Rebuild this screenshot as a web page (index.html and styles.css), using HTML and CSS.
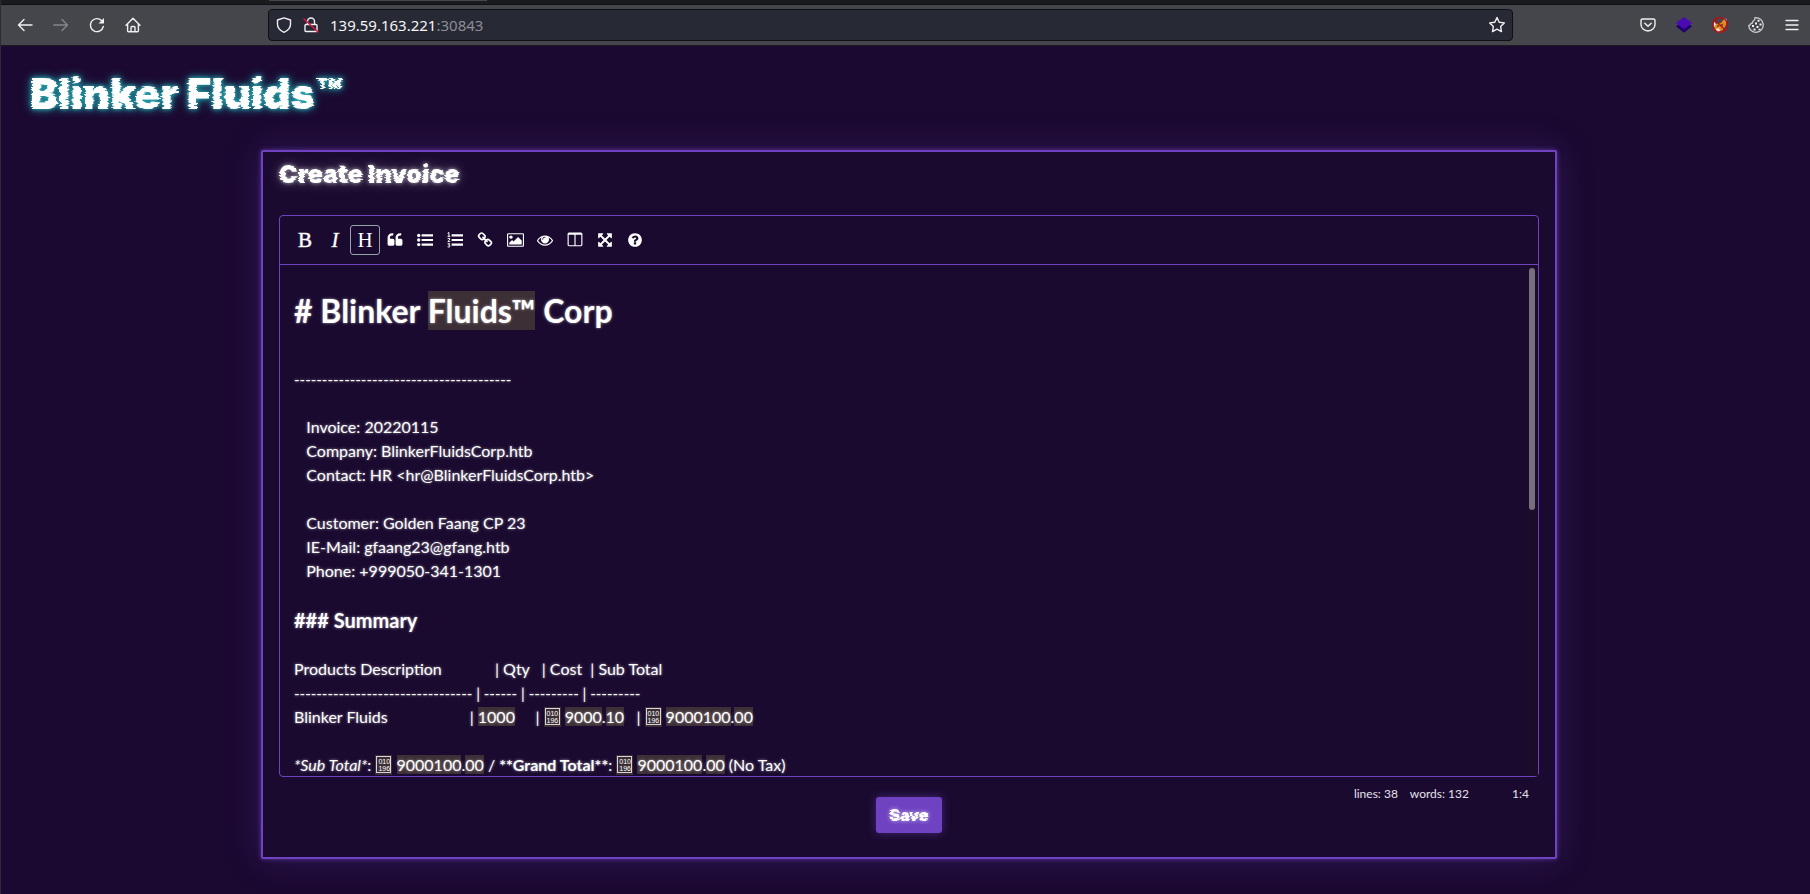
FILE: index.html
```html
<!DOCTYPE html>
<html lang="en">
<head>
<meta charset="utf-8">
<title>Blinker Fluids™</title>
<link rel="stylesheet" href="styles.css">
</head>
<body>
<svg class="defs" aria-hidden="true">
  <filter id="glitch" x="-10%" y="-20%" width="120%" height="140%" color-interpolation-filters="sRGB">
    <feTurbulence type="fractalNoise" baseFrequency="0.05 0.5" numOctaves="2" seed="4"/>
    <feColorMatrix values="1 0 0 0 0  0 0 0 0 0.5  0 0 0 0 0.5  0 0 0 0 1" result="n"/>
    <feDisplacementMap in="SourceGraphic" in2="n" scale="8" xChannelSelector="R" yChannelSelector="G"/>
  </filter>
  <filter id="glitch-sm" x="-10%" y="-20%" width="120%" height="140%" color-interpolation-filters="sRGB">
    <feTurbulence type="fractalNoise" baseFrequency="0.06 0.6" numOctaves="2" seed="7"/>
    <feColorMatrix values="1 0 0 0 0  0 0 0 0 0.5  0 0 0 0 0.5  0 0 0 0 1" result="n"/>
    <feDisplacementMap in="SourceGraphic" in2="n" scale="5" xChannelSelector="R" yChannelSelector="G"/>
  </filter>
</svg>

<div class="tabs"><span class="tab"></span></div>
<nav class="chrome" aria-label="Browser toolbar">
  <div class="nav-buttons">
    <button class="chrome-btn" aria-label="Back"><svg viewBox="0 0 16 16"><path d="M15 8H1.500M7 2.500 1.500 8 7 13.500"/></svg></button>
    <button class="chrome-btn dim" aria-label="Forward"><svg viewBox="0 0 16 16"><path d="M1 8h13.500M9 2.500 14.500 8 9 13.500"/></svg></button>
    <button class="chrome-btn" aria-label="Reload"><svg viewBox="0 0 16 16"><path d="M14.300 9.500A6.500 6.500 0 1 1 12.600 3.600"/><path class="solid" d="M15 1v5.500H9.500z"/></svg></button>
    <button class="chrome-btn" aria-label="Home"><svg viewBox="0 0 16 16"><path d="M1 8.200 8 1.300l7 6.900M2.600 7v6.700q0 1 1 1h8.800q1 0 1-1V7M6 14.500v-4q0-1 1-1h2q1 0 1 1v4"/></svg></button>
  </div>
  <div class="urlbar">
    <svg class="ico" viewBox="0 0 16 16"><path d="M8 .900 14.500 3v4.200c0 3.600-2.500 6.300-6.500 8.100C4 13.500 1.500 10.800 1.500 7.200V3z"/></svg>
    <svg class="ico lock" viewBox="0 0 16 16"><path d="M4.500 7V4.500a3.500 3.500 0 0 1 7 0V7M3 7.500h10q1 0 1 1v5q0 1-1 1H3q-1 0-1-1v-5q0-1 1-1z"/><path class="strike" d="M1 2l14 13"/></svg>
    <div class="url" role="textbox" aria-label="Address" contenteditable="true" spellcheck="false">139.59.163.221<span class="port">:30843</span></div>
    <button class="chrome-btn star" aria-label="Bookmark"><svg viewBox="0 0 16 16"><path d="M8 .500l2.200 4.700 5.100.700-3.700 3.500.9 5.200L8 12.200l-4.500 2.400.9-5.200L.700 5.900l5.100-.7z"/></svg></button>
  </div>
  <div class="ext-buttons">
    <button class="chrome-btn" aria-label="Pocket"><svg viewBox="0 0 16 16"><path d="M2.500 2h11q1.500 0 1.500 1.500V7.500a7 6.500 0 0 1-14 0V3.500Q1 2 2.500 2zM4.800 6.300 8 9.300l3.200-3"/></svg></button>
    <button class="chrome-btn" aria-label="Layers"><svg viewBox="0 0 16 16"><path fill="#22006f" stroke="none" d="M0 9.500 3 7l5 3.500L13 7l3 2.500-8 6.300z"/><path fill="#4b0bb3" stroke="none" d="M8 0l8 6-8 6-8-6z"/></svg></button>
    <button class="chrome-btn" aria-label="Proxy"><svg viewBox="0 0 16 16"><path fill="#e08a1c" stroke="none" d="M3 7l6-1 3-4 2 1v5l-3 5-5 2-3-3z"/><path fill="#e9e3dc" stroke="none" d="M1.500 4l2.500 3-2 4zM11.500 1.500l3 .5-.500 4zM4 12l3-1 1 3-3 1z"/><circle cx="6" cy="9" r="1" fill="#6b3a12" stroke="none"/><circle cx="10" cy="8" r="1" fill="#6b3a12" stroke="none"/><circle cx="8" cy="8" r="7.300" stroke="#b80f14"/><path stroke="#b80f14" d="M3 3l10 10"/></svg></button>
    <button class="chrome-btn cookie" aria-label="Cookies"><svg viewBox="0 0 16 16"><path d="M7 .800a7.300 7.300 0 1 1-6.300 7.700q1.800 0 2-1.800 1.800 0 2.200-2.200Q7 3.500 7 .800z"/><path class="solid" d="M9.500 2.700h2v2h-2zM7 5.500h2v2H7zM11.500 6.500h2v2h-2zM4 8h2v2H4zM8.500 9h2v2h-2zM5.500 11.500h2v2h-2zM10.500 11.700h2v1.500h-2z"/></svg></button>
    <button class="chrome-btn" aria-label="Menu"><svg viewBox="0 0 16 16"><path d="M2 3.500h12M2 8h12M2 12.500h12"/></svg></button>
  </div>
</nav>

<div class="page">
  <header class="brand"><h1>Blinker Fluids™</h1></header>
  <main class="panel">
    <h2 class="panel-title">Create Invoice</h2>
    <div class="editor">
      <div class="tools" role="toolbar" aria-label="Formatting">
        <button class="tool letter bold" title="Bold">B</button>
        <button class="tool letter italic" title="Italic">I</button>
        <button class="tool letter active" title="Heading">H</button>
        <button class="tool" aria-label="Quote"><svg viewBox="0 0 1792 1792"><path d="M832 960v384q0 80-56 136t-136 56h-384q-80 0-136-56t-56-136v-704q0-104 40.500-198.500t109.500-163.500 163.500-109.500 198.500-40.500h64q26 0 45 19t19 45v128q0 26-19 45t-45 19h-64q-106 0-181 75t-75 181v32q0 40 28 68t68 28h224q80 0 136 56t56 136zm896 0v384q0 80-56 136t-136 56h-384q-80 0-136-56t-56-136v-704q0-104 40.500-198.500t109.500-163.500 163.500-109.500 198.500-40.500h64q26 0 45 19t19 45v128q0 26-19 45t-45 19h-64q-106 0-181 75t-75 181v32q0 40 28 68t68 28h224q80 0 136 56t56 136z"/></svg></button>
        <button class="tool" aria-label="Generic List"><svg viewBox="0 0 16 16"><circle cx="1.700" cy="3.400" r="1.700"/><circle cx="1.700" cy="8" r="1.700"/><circle cx="1.700" cy="12.600" r="1.700"/><path d="M4.600 2.300H16v2.200H4.600zM4.600 6.900H16v2.200H4.600zM4.600 11.500H16v2.200H4.600z"/></svg></button>
        <button class="tool" aria-label="Numbered List"><svg viewBox="0 0 16 16"><path d="M4.600 2.300H16v2.200H4.600zM4.600 6.900H16v2.200H4.600zM4.600 11.500H16v2.200H4.600z"/><path class="thin" d="M.600 1.300 1.900.500v3.700M.500 4.300h2.800M.600 6.700q2.200-1.200 2.200.300 0 .900-2 2.500h2.400M.600 11.700h2.200l-1.200 1.500q1.700 0 1.400 1.200-.7 1.200-2.400.4"/></svg></button>
        <button class="tool" aria-label="Create Link"><svg viewBox="0 0 1792 1792"><path d="M1520 1216q0-40-28-68l-208-208q-28-28-68-28-42 0-72 32 3 3 19 18.500t21.500 21.500 15 19 13 25.500 3.500 27.500q0 40-28 68t-68 28q-15 0-27.500-3.500t-25.500-13-19-15-21.500-21.500-18.500-19q-33 31-33 73 0 40 28 68l206 207q27 27 68 27 40 0 68-26l147-146q28-28 28-67zm-703-705q0-40-28-68l-206-207q-28-28-68-28-39 0-68 27l-147 146q-28 28-28 67 0 40 28 68l208 208q27 27 68 27 42 0 72-31-3-3-19-18.500t-21.500-21.500-15-19-13-25.500-3.500-27.500q0-40 28-68t68-28q15 0 27.500 3.500t25.500 13 19 15 21.500 21.500 18.500 19q33-31 33-73zm895 705q0 120-85 203l-147 146q-83 83-203 83-121 0-204-85l-206-207q-83-83-83-203 0-123 88-209l-88-88q-86 88-208 88-120 0-204-84l-208-208q-84-84-84-204t85-203l147-146q83-83 203-83 121 0 204 85l206 207q83 83 83 203 0 123-88 209l88 88q86-88 208-88 120 0 204 84l208 208q84 84 84 204z"/></svg></button>
        <button class="tool wide" aria-label="Insert Image"><svg viewBox="0 0 1920 1792"><path d="M640 576q0 80-56 136t-136 56-136-56-56-136 56-136 136-56 136 56 56 136zm1024 384v448h-1408v-192l320-320 160 160 512-512zm96-704h-1600q-13 0-22.500 9.500t-9.500 22.500v1216q0 13 9.500 22.500t22.500 9.500h1600q13 0 22.500-9.500t9.500-22.500v-1216q0-13-9.500-22.500t-22.500-9.500zm160 32v1216q0 66-47 113t-113 47h-1600q-66 0-113-47t-47-113v-1216q0-66 47-113t113-47h1600q66 0 113 47t47 113z"/></svg></button>
        <button class="tool" aria-label="Toggle Preview"><svg viewBox="0 0 1792 1792"><path d="M1664 960q-152-236-381-353 61 104 61 225 0 185-131.500 316.500t-316.500 131.500-316.500-131.500-131.500-316.500q0-121 61-225-229 117-381 353 133 205 333.500 326.500t434.500 121.500 434.500-121.500 333.500-326.500zm-720-384q0-20-14-34t-34-14q-125 0-214.500 89.500t-89.500 214.500q0 20 14 34t34 14 34-14 14-34q0-86 61-147t147-61q20 0 34-14t14-34zm848 384q0 34-20 69-140 230-376.500 368.500t-499.500 138.500-499.500-139-376.500-368q-20-35-20-69t20-69q140-229 376.500-368t499.500-139 499.500 139 376.500 368q20 35 20 69z"/></svg></button>
        <button class="tool" aria-label="Toggle Side by Side"><svg viewBox="-64 -64 1792 1792"><path d="M160 1408h608v-1152h-640v1120q0 13 9.500 22.500t22.500 9.500zm1376-32v-1120h-640v1152h608q13 0 22.500-9.500t9.500-22.500zm128-1216v1216q0 66-47 113t-113 47h-1344q-66 0-113-47t-47-113v-1216q0-66 47-113t113-47h1344q66 0 113 47t47 113z"/></svg></button>
        <button class="tool" aria-label="Toggle Fullscreen"><svg viewBox="0 0 1792 1792"><path d="M1411 541l-355 355 355 355 144-144q29-31 70-14 39 17 39 59v448q0 26-19 45t-45 19h-448q-42 0-59-40-17-39 14-69l144-144-355-355-355 355 144 144q31 30 14 69-17 40-59 40h-448q-26 0-45-19t-19-45v-448q0-42 40-59 39-17 69 14l144 144 355-355-355-355-144 144q-19 19-45 19-12 0-24-5-40-17-40-59v-448q0-26 19-45t45-19h448q42 0 59 40 17 39-14 69l-144 144 355 355 355-355-144-144q-31-30-14-69 17-40 59-40h448q26 0 45 19t19 45v448q0 42-39 59-13 5-25 5-26 0-45-19z"/></svg></button>
        <button class="tool" aria-label="Markdown Guide"><svg viewBox="0 0 1792 1792"><path d="M1024 1376v-192q0-14-9-23t-23-9h-192q-14 0-23 9t-9 23v192q0 14 9 23t23 9h192q14 0 23-9t9-23zm256-672q0-88-55.500-163t-138.500-116-170-41q-243 0-371 213-15 24 8 42l132 100q7 6 19 6 16 0 25-12 53-68 86-92 34-24 86-24 48 0 85.500 26t37.500 59q0 38-20 61t-68 45q-63 28-115.500 86.500t-52.500 125.500v36q0 14 9 23t23 9h192q14 0 23-9t9-23q0-19 21.500-49.500t54.500-49.500q32-18 49-28.500t46-35 44.500-48 28-60.500 12.500-81zm384 192q0 209-103 385.500t-279.500 279.500-385.500 103-385.500-103-279.500-279.500-103-385.500 103-385.500 279.500-279.500 385.500-103 385.500 103 279.500 279.500 103 385.500z"/></svg></button>
      </div>
      <div class="code-wrap">
        <div class="code" role="textbox" aria-multiline="true" aria-label="Invoice markdown" contenteditable="true" spellcheck="false">
          <div class="line head-1"># Blinker <mark>Fluids™</mark> Corp</div>
          <div class="line"></div>
          <div class="line rule">---------------------------------------</div>
          <div class="line"></div>
          <div class="line">   Invoice: 20220115</div>
          <div class="line">   Company: BlinkerFluidsCorp.htb</div>
          <div class="line">   Contact: HR &lt;hr@BlinkerFluidsCorp.htb&gt;</div>
          <div class="line"></div>
          <div class="line">   Customer: Golden Faang CP 23</div>
          <div class="line">   IE-Mail: gfaang23@gfang.htb</div>
          <div class="line">   Phone: +999050-341-1301</div>
          <div class="line"></div>
          <div class="line head-3">### Summary</div>
          <div class="line"></div>
          <div class="line">Products Description             | Qty   | Cost  | Sub Total</div>
          <div class="line rule">-------------------------------- | ------ | --------- | ---------</div>
          <div class="line">Blinker Fluids                    | <mark>1000</mark>     | <mark class="hex"><span>010<br>196</span></mark> <mark>9000</mark>.<mark>10</mark>   | <mark class="hex"><span>010<br>196</span></mark> <mark>9000100</mark>.<mark>00</mark></div>
          <div class="line"></div>
          <div class="line"><em>*Sub Total*</em>: <mark class="hex"><span>010<br>196</span></mark> <mark>9000100</mark>.<mark>00</mark> / <strong>**Grand Total**</strong>: <mark class="hex"><span>010<br>196</span></mark> <mark>9000100</mark>.<mark>00</mark> (No Tax)</div>
        </div>
        <div class="track"><div class="thumb"></div></div>
      </div>
    </div>
    <footer class="foot">
      <button class="save"><span>Save</span></button>
      <div class="status"><span>lines: 38</span><span>words: 132</span><span class="cursor">1:4</span></div>
    </footer>
  </main>
</div>
</body>
</html>
```

FILE: styles.css
```css
* { box-sizing: border-box; }

body {
  margin: 0;
  height: 100vh;
  display: flex;
  flex-direction: column;
  overflow: hidden;
  background: #1b0931;
  border-left: 1px solid #2b2a35;
  color: #fff;
  font-family: Lato, sans-serif;
  font-size: 16px;
  line-height: 24px;
}

button { background: none; border: 0; padding: 0; color: inherit; font: inherit; }
svg { display: block; }
.defs { position: absolute; width: 0; height: 0; }

/* browser chrome */
.tabs { flex: none; height: 5px; background: #1a1b1f; border-bottom: 1px solid #0e0f12; }
.tab { display: block; width: 218px; height: 1px; margin-left: 268px; background: #44474c; }

.chrome {
  flex: none;
  display: grid;
  grid-template-columns: 267px 1fr 297px;
  align-items: center;
  height: 41px;
  background: #44464c;
  border-bottom: 1px solid #1a1b1f;
}
.nav-buttons { display: flex; gap: 20px; padding-left: 16px; }
.ext-buttons { display: flex; gap: 20px; justify-content: flex-end; padding-right: 10px; }
.chrome-btn { width: 16px; height: 16px; flex: none; }
.chrome svg { width: 16px; height: 16px; overflow: visible; fill: none; stroke: #f0f0f2; stroke-width: 1.4; stroke-linecap: round; stroke-linejoin: round; }
.chrome .solid { fill: #f0f0f2; stroke: none; }
.dim svg { stroke: #85868b; }
.cookie svg { stroke: #c6c7ca; }
.chrome .strike { stroke: #e4123f; }

.urlbar {
  display: flex;
  align-items: center;
  gap: 11px;
  height: 32px;
  padding: 0 7px;
  background: #272934;
  border: 1px solid #0f1014;
  border-radius: 4px;
}
.url { flex: 1; font: 15px/24px "Noto Sans", sans-serif; color: #f5f5f7; outline: 0; }
.port { color: #8c8d95; }

/* page */
.page { flex: 1; min-height: 0; display: flex; flex-direction: column; padding: 0 0 35px 7px; }
.brand { padding: 23px 0 31px 22px; }
.brand h1 {
  margin: 0;
  font: 900 42px/50px Inter, sans-serif;
  filter: url(#glitch) drop-shadow(0 0 2px #2fb3bd) drop-shadow(0 0 4px #1c7f8c);
}

.panel {
  flex: 1;
  min-height: 0;
  display: flex;
  flex-direction: column;
  width: calc(100% - 48px);
  max-width: 1296px;
  margin: 0 auto;
  padding: 0 16px 24px;
  background: #1a0a2f;
  border: 2px solid #6f42c1;
  border-radius: 2px;
  box-shadow: 0 0 5px #6f42c1b0, 0 0 36px #6f42c140;
}
.panel-title {
  margin: 0;
  padding: 6px 0 25px;
  font: 900 25px/32px Inter, sans-serif;
  filter: url(#glitch-sm) drop-shadow(0 0 2px #ffffff99) drop-shadow(0 0 6px #ffffff40);
}

.editor { flex: 1; min-height: 0; display: flex; flex-direction: column; border: 1px solid #6f42c1; border-radius: 4px; }
.tools { flex: none; display: flex; padding: 9px 10px; border-bottom: 1px solid #6f42c1; }
.tool { display: grid; place-items: center; width: 30px; height: 30px; border: 1px solid transparent; border-radius: 3px; }
.tool svg { width: 16px; height: 16px; fill: #fff; overflow: visible; }
.wide svg { width: 17px; }
.thin { fill: none; stroke: #fff; stroke-width: 1; }
.letter { font: 21px/28px "Liberation Serif", serif; }
.bold { -webkit-text-stroke: 1px #ffffff80; }
.italic { font-style: italic; -webkit-text-stroke: 1px #ffffff60; }
.active { border-color: #95a5a6; }

.code-wrap { position: relative; flex: 1; min-height: 0; overflow: hidden; }
.code { height: 100%; padding: 10px; overflow: hidden; outline: 0; text-shadow: 0 0 3px #ffffff99; }
.line { height: 24px; padding: 0 4px; white-space: pre; }
.rule { font-size: 15px; }
.head-1 { height: auto; margin: 12px 0 8px; font-size: 32px; line-height: 48px; font-weight: 700; }
.head-3 { height: auto; font-size: 20px; line-height: 26px; font-weight: 700; }
mark { background: #3d2f36; color: inherit; }
.hex { display: inline-block; height: 20px; padding: 1px; vertical-align: text-top; line-height: 1; }
.hex span {
  display: block;
  padding: 1px 0 0 1px;
  width: 15px;
  height: 17px;
  border: 1px solid #d8d4d8;
  font: 7px/7px "Liberation Sans", sans-serif;
  text-shadow: none;
}
.track { position: absolute; top: 0; right: 0; bottom: 0; width: 11px; padding: 3px 2px; background: #1b0d2a; }
.thumb { height: 48%; width: 6px; border-radius: 3px; background: #776f80; }

.foot { flex: none; display: grid; grid-template-columns: 1fr auto 1fr; }
.save {
  grid-column: 2;
  margin-top: 20px;
  width: 66px;
  height: 36px;
  border-radius: 3px;
  background: #6f42c1;
  box-shadow: 0 0 10px #6f42c180;
  font: 900 16px/24px Inter, sans-serif;
}
.save span { display: block; filter: url(#glitch-sm) drop-shadow(0 0 2px #ffffff99); }
.status {
  grid-column: 3;
  justify-self: end;
  display: flex;
  gap: 12px;
  padding: 8px 10px;
  font-size: 12px;
  line-height: 18px;
  color: #e6e1ec;
}
.cursor { min-width: 48px; text-align: right; }
```
